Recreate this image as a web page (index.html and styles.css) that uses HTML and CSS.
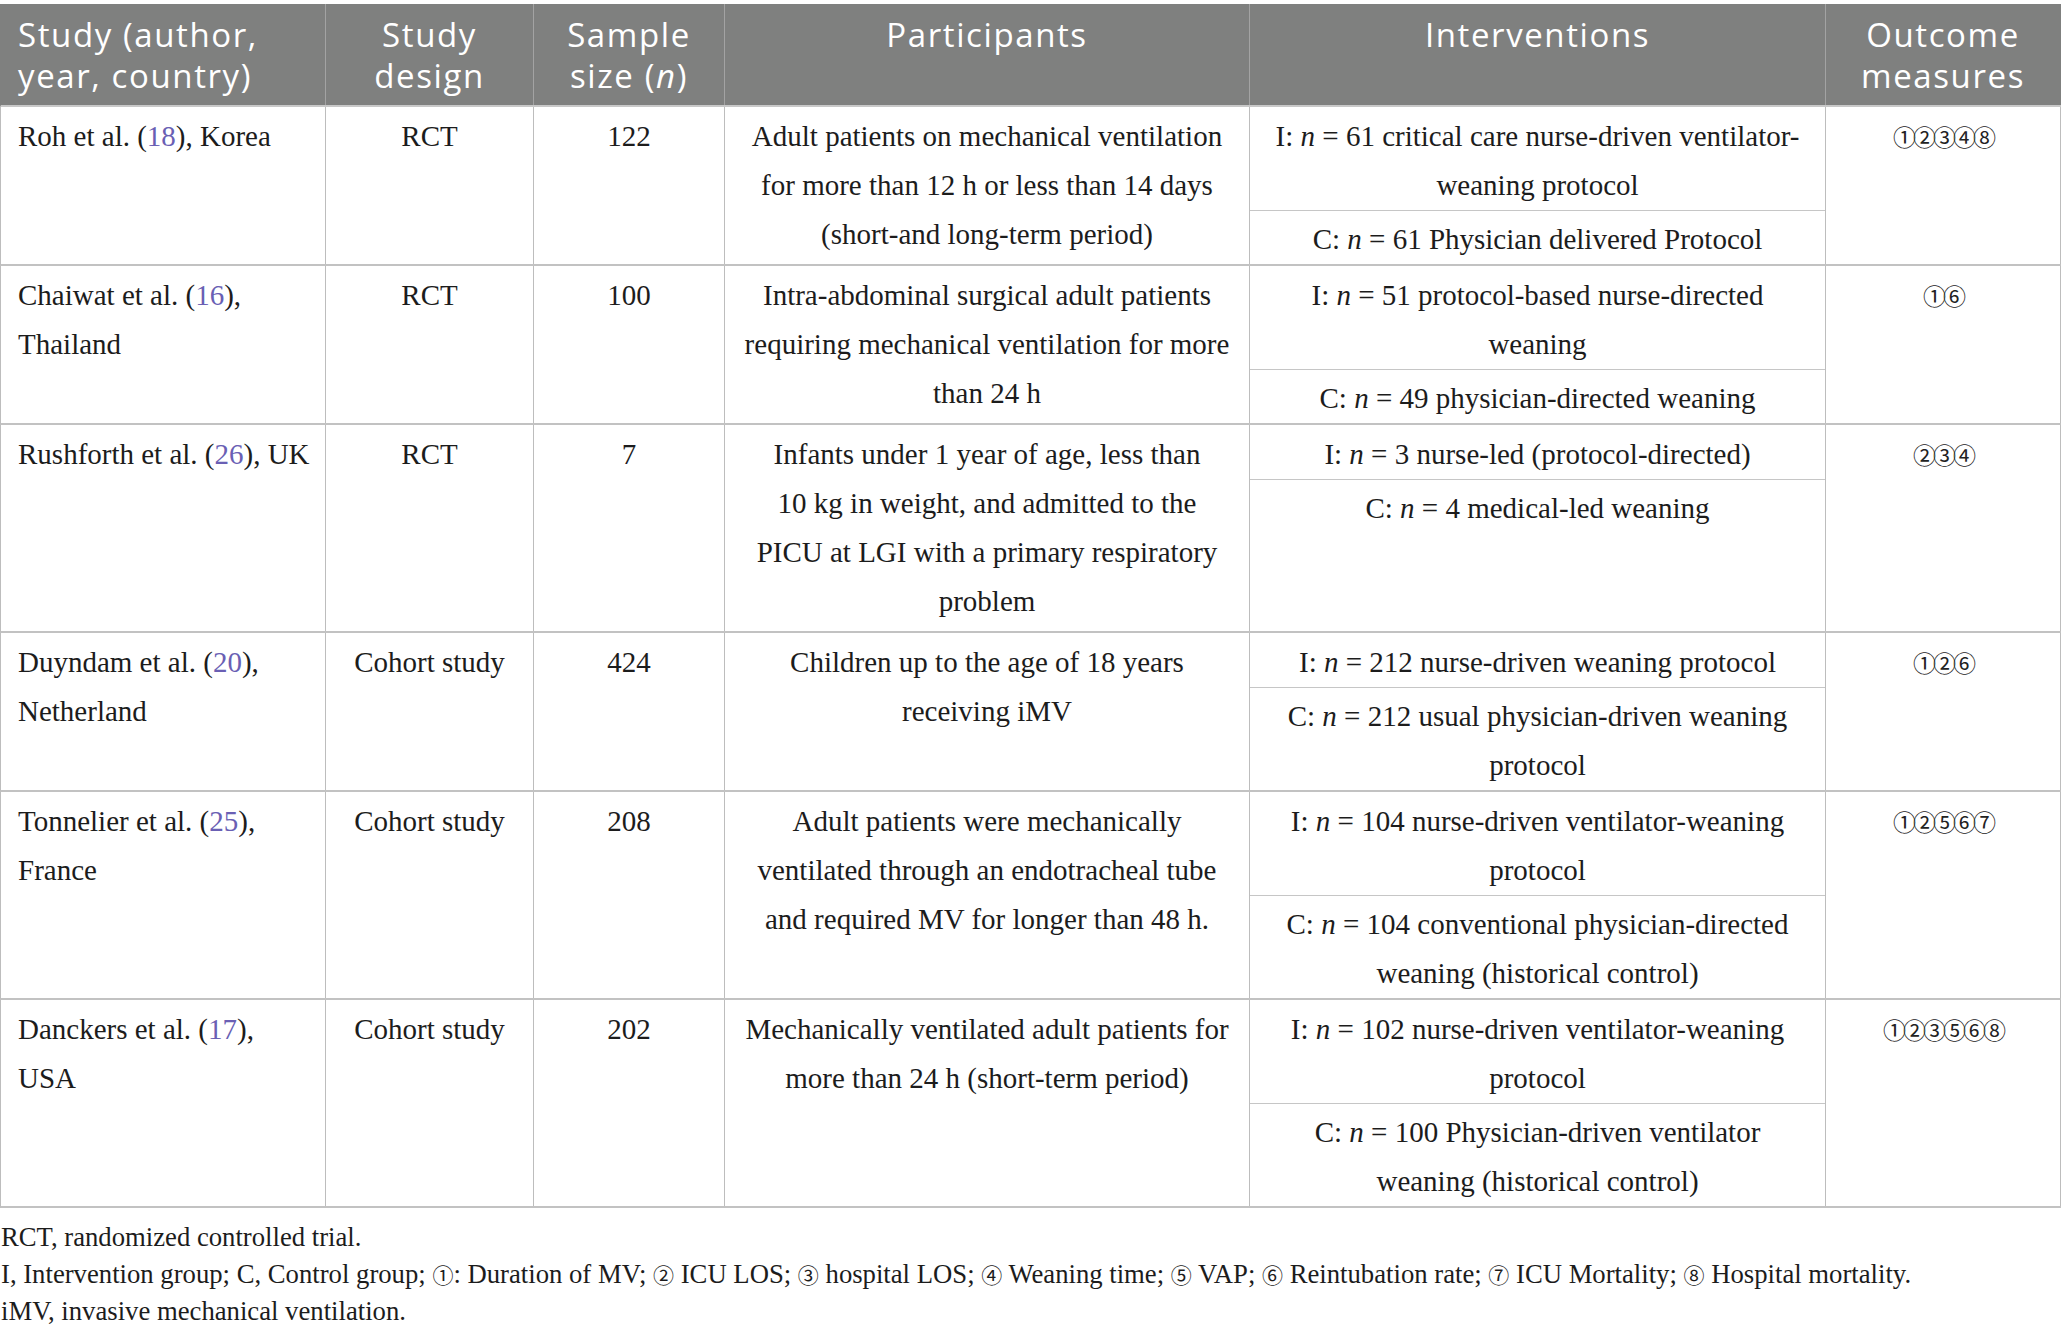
FILE: index.html
```html
<!DOCTYPE html>
<html lang="en">
<head>
<meta charset="utf-8">
<title>Characteristics of included studies</title>
<link rel="stylesheet" href="styles.css">
</head>
<body>
<div class="table">
  <div class="row head">
    <div class="cell first">Study (author, year, country)</div>
    <div class="cell">Study design</div>
    <div class="cell">Sample size (<i>n</i>)</div>
    <div class="cell">Participants</div>
    <div class="cell">Interventions</div>
    <div class="cell">Outcome measures</div>
  </div>

  <div class="row">
    <div class="cell first">Roh et al. (<a class="ref">18</a>), Korea</div>
    <div class="cell">RCT</div>
    <div class="cell">122</div>
    <div class="cell part">Adult patients on mechanical ventilation for more than 12&nbsp;h or less than 14&nbsp;days (short-and long-term period)</div>
    <div class="cell iv">
      <div class="sub">I: <i>n</i> = 61 critical care nurse-driven ventilator-weaning protocol</div>
      <div class="sub">C: <i>n</i> = 61 Physician delivered Protocol</div>
    </div>
    <div class="cell oc">①②③④⑧</div>
  </div>

  <div class="row">
    <div class="cell first">Chaiwat et al. (<a class="ref">16</a>), Thailand</div>
    <div class="cell">RCT</div>
    <div class="cell">100</div>
    <div class="cell part">Intra-abdominal surgical adult patients requiring mechanical ventilation for more than 24&nbsp;h</div>
    <div class="cell iv">
      <div class="sub">I: <i>n</i> = 51 protocol-based nurse-directed weaning</div>
      <div class="sub">C: <i>n</i> = 49 physician-directed weaning</div>
    </div>
    <div class="cell oc">①⑥</div>
  </div>

  <div class="row">
    <div class="cell first">Rushforth et al. (<a class="ref">26</a>), UK</div>
    <div class="cell">RCT</div>
    <div class="cell">7</div>
    <div class="cell part">Infants under 1 year of age, less than 10&nbsp;kg in weight, and admitted to the PICU at LGI with a primary respiratory problem</div>
    <div class="cell iv">
      <div class="sub">I: <i>n</i> = 3 nurse-led (protocol-directed)</div>
      <div class="sub">C: <i>n</i> = 4 medical-led weaning</div>
    </div>
    <div class="cell oc">②③④</div>
  </div>

  <div class="row">
    <div class="cell first">Duyndam et al. (<a class="ref">20</a>), Netherland</div>
    <div class="cell">Cohort study</div>
    <div class="cell">424</div>
    <div class="cell part">Children up to the age of 18 years receiving iMV</div>
    <div class="cell iv">
      <div class="sub">I: <i>n</i> = 212 nurse-driven weaning protocol</div>
      <div class="sub">C: <i>n</i> = 212 usual physician-driven weaning protocol</div>
    </div>
    <div class="cell oc">①②⑥</div>
  </div>

  <div class="row">
    <div class="cell first">Tonnelier et al. (<a class="ref">25</a>), France</div>
    <div class="cell">Cohort study</div>
    <div class="cell">208</div>
    <div class="cell part">Adult patients were mechanically ventilated through an endotracheal tube and required MV for longer than 48&nbsp;h.</div>
    <div class="cell iv">
      <div class="sub">I: <i>n</i> = 104 nurse-driven ventilator-weaning protocol</div>
      <div class="sub">C: <i>n</i> = 104 conventional physician-directed weaning (historical control)</div>
    </div>
    <div class="cell oc">①②⑤⑥⑦</div>
  </div>

  <div class="row">
    <div class="cell first">Danckers et al. (<a class="ref">17</a>), USA</div>
    <div class="cell">Cohort study</div>
    <div class="cell">202</div>
    <div class="cell part">Mechanically ventilated adult patients for more than 24&nbsp;h (short-term period)</div>
    <div class="cell iv">
      <div class="sub">I: <i>n</i> = 102 nurse-driven ventilator-weaning protocol</div>
      <div class="sub">C: <i>n</i> = 100 Physician-driven ventilator weaning (historical control)</div>
    </div>
    <div class="cell oc">①②③⑤⑥⑧</div>
  </div>
</div>

<div class="notes">
  <p>RCT, randomized controlled trial.</p>
  <p>I, Intervention group; C, Control group; <span class="circ">①</span>: Duration of MV; <span class="circ">②</span> ICU LOS; <span class="circ">③</span> hospital LOS; <span class="circ">④</span> Weaning time; <span class="circ">⑤</span> VAP; <span class="circ">⑥</span> Reintubation rate; <span class="circ">⑦</span> ICU Mortality; <span class="circ">⑧</span> Hospital mortality.</p>
  <p>iMV, invasive mechanical ventilation.</p>
</div>
</body>
</html>
```

FILE: styles.css
```css
html, body {
  margin: 0;
  padding: 0;
  background: #ffffff;
}

body {
  padding-top: 4px;
  font-family: "Liberation Serif", "Times New Roman", serif;
  color: #1c1c1c;
}

.table {
  width: 2061px;
}

.row {
  display: grid;
  grid-template-columns: 325px 208px 191px 525px 576px 235px;
  border-left: 1px solid #bdbdbd;
  border-bottom: 2px solid #c2c2c2;
}

.cell {
  border-right: 1px solid #bdbdbd;
  padding: 5px 16px;
  font-size: 29px;
  line-height: 49px;
  text-align: center;
}

.cell.first {
  text-align: left;
  padding: 5px 14px 5px 17px;
}

.cell.part {
  padding: 5px 18px;
}

.head {
  background: #7f807f;
  border-left-color: #7f807f;
  border-bottom: 2px solid #c8c8c8;
}

.head .cell {
  font-family: "Open Sans", "Noto Sans", sans-serif;
  font-size: 33px;
  line-height: 41px;
  letter-spacing: 1.6px;
  color: #ffffff;
  padding: 10px 12px 9px;
  border-right-color: #a3a3a3;
}

.head .cell.first {
  padding-left: 17px;
}

.head .cell:last-child {
  border-right-color: #7f807f;
}

.cell.iv {
  display: flex;
  flex-direction: column;
  padding: 0;
}

.iv .sub {
  padding: 5px 20px 0;
}

.iv .sub + .sub {
  flex: 1;
  border-top: 1px solid #c6c6c6;
  padding-top: 4px;
}

.cell.oc {
  font-family: "Noto Sans CJK JP", "DejaVu Sans", sans-serif;
  font-size: 23px;
  letter-spacing: -3px;
  line-height: 49px;
  color: #222222;
}

.ref {
  color: #6a5fb4;
  text-decoration: none;
}

.notes {
  margin-top: 11px;
  font-size: 26.7px;
  line-height: 37px;
  color: #1c1c1c;
}

.notes p {
  margin: 0;
  padding-left: 1px;
}

.circ {
  font-family: "Noto Sans CJK JP", "DejaVu Sans", sans-serif;
  font-size: 21px;
}
```
